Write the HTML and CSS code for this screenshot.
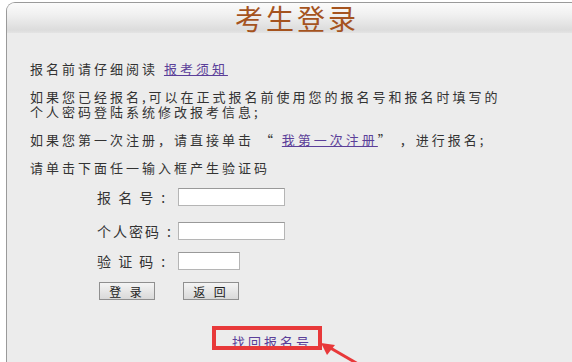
FILE: index.html
```html
<!DOCTYPE html>
<html lang="zh-CN">
<head>
<meta charset="UTF-8" />
<title>考生登录</title>
<link rel="stylesheet" href="styles.css">
</head>
<body>

<div class="panel">
  <!-- title bar -->
  <div class="head">考生登录</div>

  <div class="content">
    <p>报名前请仔细阅读 <a href="#">报考须知</a></p>
    <p>如果您已经报名,可以在正式报名前使用您的报名号和报名时填写的<br>个人密码登陆系统修改报考信息;</p>
    <p>如果您第一次注册，请直接单击 “ <a href="#">我第一次注册</a>” ，进行报名;</p>
    <p>请单击下面任一输入框产生验证码</p>

    <!-- login form -->
    <form class="login">
      <div class="row"><label>报&nbsp;名&nbsp;号<span class="colon">:</span></label><input type="text" class="inp"></div>
      <div class="row"><label>个人密码<span class="colon">:</span></label><input type="password" class="inp"></div>
      <div class="row"><label>验&nbsp;证&nbsp;码<span class="colon">:</span></label><input type="text" class="inp short"></div>
      <div class="btns">
        <button type="button" class="btn">登 录</button>
        <button type="button" class="btn">返 回</button>
      </div>
    </form>

    <div class="find">
      <a href="#">找回报名号</a>
      <span class="mark"></span>
    </div>
  </div>
</div>

<!-- red arrow pointing at the link -->
<svg class="arrow" width="80" height="40" viewBox="0 0 80 40">
  <line x1="8" y1="4" x2="70" y2="40" stroke="#e8393a" stroke-width="3"/>
  <polygon points="2,1 16,3 8,13" fill="#e8393a"/>
</svg>

</body>
</html>
```

FILE: styles.css
```css
*{box-sizing:border-box;margin:0;padding:0}

body{
  background:#fff;
  width:572px;height:362px;
  overflow:hidden;
  position:relative;
  font-family:"Noto Sans CJK SC","Noto Sans",sans-serif;
  color:#333;
}

/* outer panel, runs off the right edge */
.panel{
  margin:2px 0 0 6px;
  width:600px;height:400px;
  background:#ececec;
  border:1px solid #9a9a9a;
  border-right:none;border-bottom:none;
  border-top-left-radius:9px;
  overflow:hidden;
}

.head{
  height:30px;
  line-height:31px;
  text-align:center;
  padding-right:19px;
  font-size:28px;
  letter-spacing:3px;
  color:#a5531e;
  background:linear-gradient(#fbfbfb,#f0f0f0 40%,#dcdcdc 90%,#e4e4e4);
}

.content{
  padding:28px 0 0 23px;
  font-size:13px;
  letter-spacing:3px;
  white-space:nowrap;
}
.content p{line-height:15px;margin-bottom:13px}
.content a{color:#5b3f99;text-decoration:underline}

/* form */
.login{margin:13px 0 0 67px}
.row{display:flex;align-items:center;height:18px;margin-bottom:16px}
.row:nth-child(2){margin-bottom:12px}
.row label{width:81px;font-size:14px;letter-spacing:2px;color:#333}
.colon{padding-left:6px}
.inp{
  width:107px;height:18px;
  border:1px solid #b5b5b5;
  border-top-color:#999;
  background:#fff;
}
.inp.short{width:62px}

.btns{display:flex;gap:28px;margin:-4px 0 0 2px}
.btn{
  width:56px;height:18px;
  font-family:inherit;font-size:12px;letter-spacing:3px;
  color:#222;
  background:linear-gradient(#f4f4f4,#d9d9d9);
  border:1px solid #8f8f8f;
}

/* retrieve link with red highlight box */
.find{
  position:relative;
  margin:34px 0 0 202px;
  width:82px;
  font-size:13px;letter-spacing:3px;
  line-height:16px;
}
.mark{
  position:absolute;
  left:-20px;top:-8px;
  width:110px;height:24px;
  border:4px solid #e8393a;
}

.arrow{position:absolute;left:319px;top:342px}
```
